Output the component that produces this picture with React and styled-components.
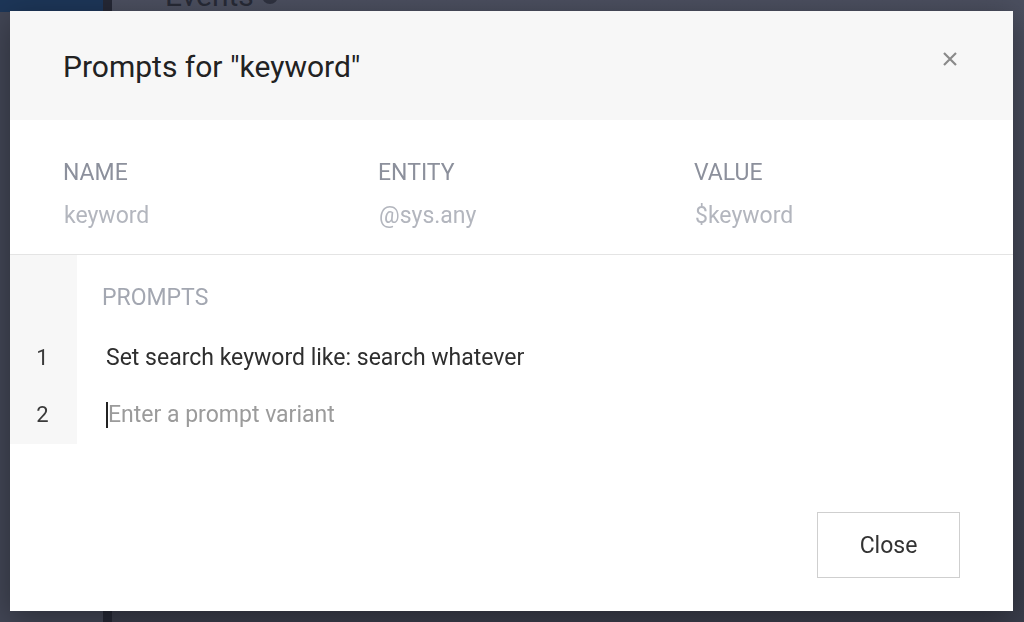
import React from "react";
import styled, { createGlobalStyle } from "styled-components";

const GlobalStyle = createGlobalStyle`
  html, body { margin: 0; padding: 0; }
  body {
    font-family: Roboto, "Noto Sans", "Liberation Sans", sans-serif;
    background: #474b5b;
    overflow: hidden;
  }
  * { box-sizing: border-box; }
`;

const Backdrop = styled.div`
  display: flex;
  width: 1024px;
  height: 622px;
  background: linear-gradient(#4b4f5f, #3a3d4b);
`;

const Sidebar = styled.div`
  width: 103px;
  display: flex;
  flex-direction: column;
  background: #424655;
`;

const SidebarLogo = styled.div`
  height: 12px;
  background: #1d3658;
`;

const SideDivider = styled.div`
  width: 9px;
  background: #252835;
`;

const MainArea = styled.div`
  flex: 1;
  padding-left: 53px;
`;

const PageTitle = styled.div`
  margin-top: -22px;
  font-size: 30px;
  color: #272a36;
  display: flex;
  align-items: center;
  gap: 8px;
`;

const TitleDot = styled.span`
  width: 16px;
  height: 16px;
  border-radius: 50%;
  background: #2f3240;
`;

const Modal = styled.div`
  position: fixed;
  top: 11px;
  left: 10px;
  width: 1003px;
  height: 600px;
  background: #ffffff;
  display: flex;
  flex-direction: column;
  box-shadow: 0 8px 30px rgba(0, 0, 0, 0.35);
`;

const Header = styled.div`
  height: 109px;
  background: #f7f7f7;
  display: flex;
  align-items: center;
  justify-content: space-between;
  padding: 0 55px 0 53px;
`;

const Title = styled.h2`
  margin: 0;
  font-weight: 400;
  font-size: 30px;
  color: #222222;
  margin-top: 2px;
`;

const CloseIcon = styled.button`
  border: none;
  background: none;
  padding: 0;
  width: 16px;
  height: 16px;
  margin-top: -14px;
  display: flex;
  cursor: pointer;
`;

const Fields = styled.div`
  display: grid;
  grid-template-columns: 315px 316px 1fr;
  padding: 40px 53px 0;
  height: 135px;
  border-bottom: 1px solid #e4e4e4;
`;

const Field = styled.div`
  display: flex;
  flex-direction: column;
`;

const FieldLabel = styled.div`
  font-size: 23px;
  line-height: 26px;
  color: #8c909c;
  text-transform: uppercase;
  margin-bottom: 17px;
`;

const FieldValue = styled.div`
  font-size: 23px;
  line-height: 26px;
  color: #b3b6be;
  padding-left: 1px;
`;

const PromptGrid = styled.div`
  display: grid;
  grid-template-columns: 67px 1fr;
  grid-template-rows: 74px 56px 59px;
`;

const Gutter = styled.div`
  background: #f7f7f7;
  display: flex;
  align-items: center;
  justify-content: center;
  font-size: 22px;
  color: #3a3a3a;
  padding-right: 2px;
`;

const PromptsLabel = styled.div`
  padding: 30px 0 0 25px;
  font-size: 23px;
  line-height: 26px;
  color: #a3a7b1;
  text-transform: uppercase;
`;

const PromptRow = styled.div`
  display: flex;
  align-items: center;
  padding-left: 29px;
  font-size: 23px;
  color: ${(p) => (p.$placeholder ? "#9b9b9b" : "#2e2e2e")};
`;

const Caret = styled.span`
  display: inline-block;
  width: 2px;
  height: 26px;
  background: #222;
`;

const Footer = styled.div`
  margin-top: auto;
  display: flex;
  justify-content: flex-end;
  padding: 0 53px 33px;
`;

const Button = styled.button`
  width: 143px;
  height: 66px;
  border: 1px solid #cfcfcf;
  background: #ffffff;
  font-family: inherit;
  font-size: 23px;
  color: #333333;
  cursor: pointer;
`;

const fields = [
  { label: "Name", value: "keyword" },
  { label: "Entity", value: "@sys.any" },
  { label: "Value", value: "$keyword" },
];

export default function App() {
  return (
    <>
      <GlobalStyle />
      <Backdrop>
        <Sidebar>
          <SidebarLogo />
        </Sidebar>
        <SideDivider />
        <MainArea>
          <PageTitle>
            Events <TitleDot />
          </PageTitle>
        </MainArea>
      </Backdrop>
      <Modal>
        <Header>
          <Title>Prompts for "keyword"</Title>
          <CloseIcon aria-label="close">
            <svg width="16" height="16" viewBox="0 0 16 16">
              <path d="M2 2 L14 14 M14 2 L2 14" stroke="#8a8a8a" strokeWidth="2.2" />
            </svg>
          </CloseIcon>
        </Header>
        <Fields>
          {fields.map((f) => (
            <Field key={f.label}>
              <FieldLabel>{f.label}</FieldLabel>
              <FieldValue>{f.value}</FieldValue>
            </Field>
          ))}
        </Fields>
        <PromptGrid>
          <Gutter />
          <PromptsLabel>Prompts</PromptsLabel>
          <Gutter>1</Gutter>
          <PromptRow>Set search keyword like: search whatever</PromptRow>
          <Gutter>2</Gutter>
          <PromptRow $placeholder>
            <Caret />
            Enter a prompt variant
          </PromptRow>
        </PromptGrid>
        <Footer>
          <Button>Close</Button>
        </Footer>
      </Modal>
    </>
  );
}
